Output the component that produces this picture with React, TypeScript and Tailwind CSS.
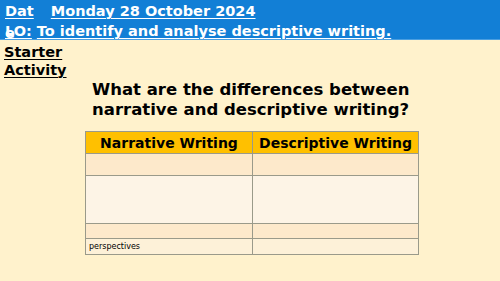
export default function App() {
  const font = { fontFamily: '"DejaVu Sans", sans-serif' };
  return (
    <div className="w-[500px] h-[281px] bg-[#fff2cc] overflow-hidden text-black" style={font}>
      {/* Blue header */}
      <div className="h-[40px] bg-[#127fd6] text-white font-bold text-[14.5px] leading-[15px] pt-[4px] border-b border-[#4a9ee0]">
        <div className="flex items-start h-[20px]">
          <span className="ml-[5px] underline decoration-1 underline-offset-2">Dat</span>
          <span className="ml-[17px] underline decoration-1 underline-offset-2">Monday 28 October 2024</span>
        </div>
        <div className="relative flex items-start pl-[5px]">
          <span className="absolute left-[5px] top-[2px]">e</span>
          <span className="underline decoration-1 underline-offset-2">LO:</span>
          <span className="ml-[5px] underline decoration-1 underline-offset-2">To identify and analyse descriptive writing.</span>
        </div>
      </div>

      {/* Starter */}
      <div className="pl-[4px] pt-[3px] font-bold text-[14.5px] leading-[18px] underline decoration-1 underline-offset-2">
        <div>Starter</div>
        <div>Activity</div>
      </div>

      {/* Question */}
      <div className="pl-[92px] mt-[1px] font-bold text-[16.5px] leading-[20px]">
        <div>What are the differences between</div>
        <div>narrative and descriptive writing?</div>
      </div>

      {/* Table */}
      <div className="ml-[85px] mt-[11px] w-[334px] border border-[#9a9a8a] text-[13px]">
        <div className="grid grid-cols-[167px_1fr] h-[22px] bg-[#ffc000] border-b border-[#9a9a8a] font-bold text-[14px] leading-[22px]">
          <div className="border-r border-[#9a9a8a] text-center">Narrative Writing</div>
          <div className="text-center">Descriptive Writing</div>
        </div>
        <div className="grid grid-cols-[167px_1fr] h-[22px] bg-[#fde9cb] border-b border-[#9a9a8a]">
          <div className="border-r border-[#9a9a8a]"></div>
          <div></div>
        </div>
        <div className="grid grid-cols-[167px_1fr] h-[48px] bg-[#fdf4e6] border-b border-[#9a9a8a]">
          <div className="border-r border-[#9a9a8a]"></div>
          <div></div>
        </div>
        <div className="grid grid-cols-[167px_1fr] h-[15px] bg-[#fde9cb] border-b border-[#9a9a8a]">
          <div className="border-r border-[#9a9a8a]"></div>
          <div></div>
        </div>
        <div className="grid grid-cols-[167px_1fr] h-[15px] bg-[#fdf1d8] text-[8px] leading-[15px]">
          <div className="border-r border-[#9a9a8a] pl-[3px]">perspectives</div>
          <div></div>
        </div>
      </div>
    </div>
  );
}
